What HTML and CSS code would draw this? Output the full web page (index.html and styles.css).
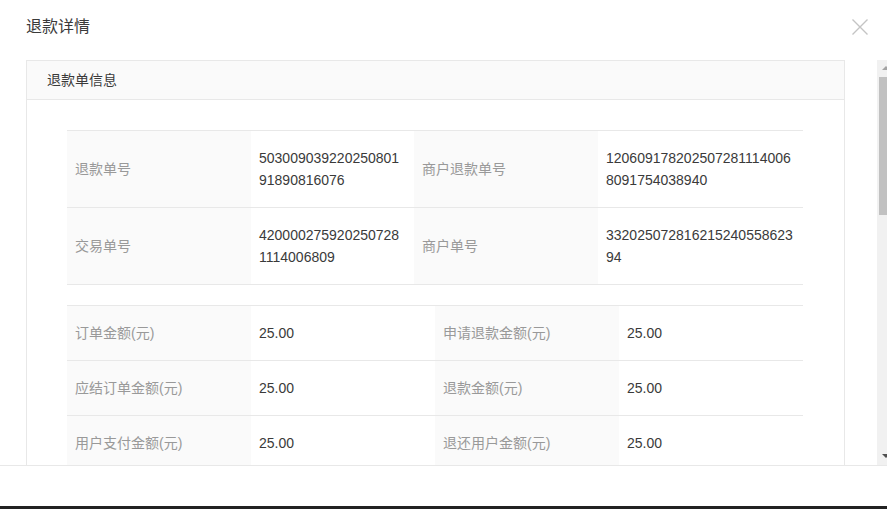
FILE: index.html
```html
<!DOCTYPE html>
<html lang="zh-CN">
<head>
    <meta charset="UTF-8">
    <meta name="viewport" content="width=device-width, initial-scale=1.0">
    <title>退款详情</title>
    <link rel="stylesheet" href="styles.css">
</head>
<body>
    <div class="modal">
        <div class="modal-header">
            <div class="modal-title">退款详情</div>
            <button class="modal-close" aria-label="关闭">
                <svg width="16" height="16" viewBox="0 0 16 16">
                    <path d="M0.5 0.5 L15.5 15.5 M15.5 0.5 L0.5 15.5" stroke="#c4c4c4" stroke-width="1.4" fill="none"/>
                </svg>
            </button>
        </div>

        <div class="modal-body">
            <div class="scroll-content">
                <div class="card">
                    <div class="card-header">退款单信息</div>
                    <div class="card-body">
                        <table class="info-table ids">
                            <colgroup>
                                <col class="c-label">
                                <col class="c-value-a">
                                <col class="c-label">
                                <col class="c-value-b">
                            </colgroup>
                            <tr>
                                <td class="label">退款单号</td>
                                <td class="value">50300903922025080191890816076</td>
                                <td class="label">商户退款单号</td>
                                <td class="value">1206091782025072811140068091754038940</td>
                            </tr>
                            <tr>
                                <td class="label">交易单号</td>
                                <td class="value">4200002759202507281114006809</td>
                                <td class="label">商户单号</td>
                                <td class="value">33202507281621524055862394</td>
                            </tr>
                        </table>

                        <table class="info-table amounts">
                            <tr>
                                <td class="label">订单金额(元)</td>
                                <td class="value">25.00</td>
                                <td class="label">申请退款金额(元)</td>
                                <td class="value">25.00</td>
                            </tr>
                            <tr>
                                <td class="label">应结订单金额(元)</td>
                                <td class="value">25.00</td>
                                <td class="label">退款金额(元)</td>
                                <td class="value">25.00</td>
                            </tr>
                            <tr>
                                <td class="label">用户支付金额(元)</td>
                                <td class="value">25.00</td>
                                <td class="label">退还用户金额(元)</td>
                                <td class="value">25.00</td>
                            </tr>
                        </table>
                    </div>
                </div>
            </div>

            <div class="scrollbar">
                <div class="arrow up"></div>
                <div class="thumb"></div>
                <div class="track-rest"></div>
                <div class="arrow down"></div>
            </div>
        </div>

        <div class="modal-footer"></div>
        <div class="taskbar"></div>
    </div>
</body>
</html>
```

FILE: styles.css
```css
:root {
    --border: #e8e8e8;
    --label-bg: #fafafa;
    --text: #3a3a3a;
    --muted: #999;
}

* {
    box-sizing: border-box;
}

html, body {
    margin: 0;
    height: 100%;
    overflow: hidden;
    background: #fff;
}

body {
    font-family: "Liberation Sans", "Noto Sans CJK SC", sans-serif;
    font-size: 14px;
    color: var(--text);
}

.modal {
    display: flex;
    flex-direction: column;
    height: 509px;
}

.modal-header {
    height: 60px;
    display: flex;
    justify-content: space-between;
    align-items: flex-start;
    padding: 16px 19px 0 26px;
}

.modal-title {
    font-size: 16px;
    line-height: 22px;
    color: var(--text);
}

.modal-close {
    border: none;
    background: none;
    padding: 0;
    margin-top: 3px;
    width: 16px;
    height: 16px;
    cursor: pointer;
}

.modal-close svg {
    display: block;
}

.modal-body {
    height: 405px;
    display: flex;
    overflow: hidden;
}

.scroll-content {
    flex: 1;
    overflow: hidden;
    padding: 0 32px 0 26px;
}

.card {
    border: 1px solid var(--border);
}

.card-header {
    height: 39px;
    line-height: 38px;
    padding-left: 20px;
    background: var(--label-bg);
    border-bottom: 1px solid var(--border);
}

.card-body {
    padding: 30px 41px 30px 40px;
}

.info-table {
    width: 100%;
    border-collapse: collapse;
    table-layout: fixed;
}

.info-table + .info-table {
    margin-top: 20px;
}

.info-table tr {
    border-top: 1px solid var(--border);
    border-bottom: 1px solid var(--border);
}

.info-table td {
    padding: 16px 8px;
    line-height: 22px;
    vertical-align: middle;
}

.info-table .label {
    background: var(--label-bg);
    color: var(--muted);
}

.info-table .value {
    color: var(--text);
    word-break: break-all;
}

.c-label {
    width: 184px;
}

.c-value-a {
    width: 163px;
}

.scrollbar {
    width: 10px;
    background: #f1f1f1;
    display: flex;
    flex-direction: column;
}

.arrow {
    height: 17px;
    position: relative;
}

.arrow::after {
    content: "";
    position: absolute;
    left: 5px;
    border-left: 4px solid transparent;
    border-right: 4px solid transparent;
}

.arrow.up::after {
    top: 6px;
    border-bottom: 4px solid #a3a3a3;
}

.arrow.down::after {
    bottom: 7px;
    border-top: 4px solid #505050;
}

.thumb {
    height: 138px;
    margin-left: 2px;
    background: #c1c1c1;
}

.track-rest {
    flex: 1;
}

.modal-footer {
    height: 41px;
    border-top: 1px solid var(--border);
}

.taskbar {
    height: 3px;
    background: #222;
}
```
